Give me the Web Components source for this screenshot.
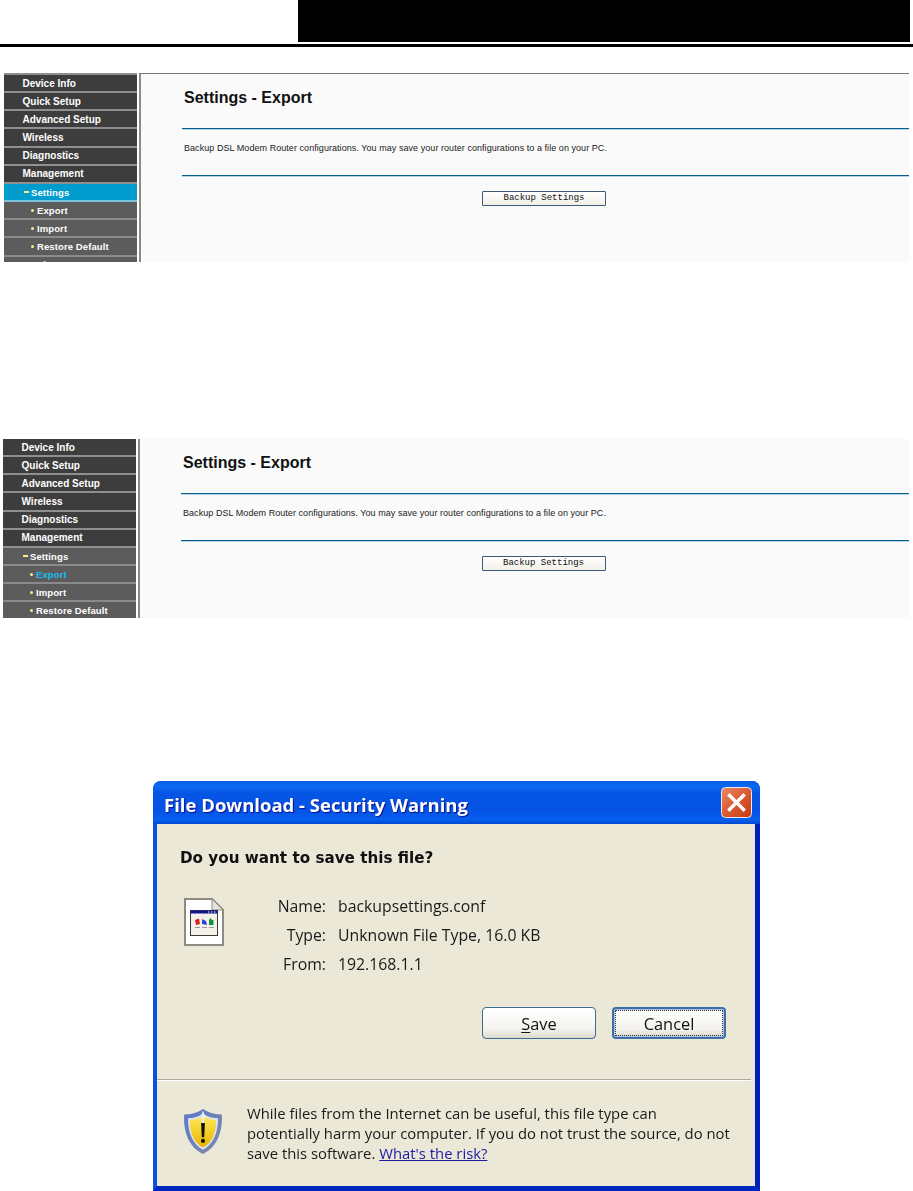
<!DOCTYPE html>
<html>
<head>
<meta charset="utf-8">
<title>Settings - Export</title>
<style>
  html, body { margin: 0; padding: 0; background: #fff; }
  body { height: 1191px; overflow: hidden; font-family: "Liberation Sans", Arial, sans-serif; }
</style>
</head>
<body>
<doc-header></doc-header>

<router-shot style="margin: 26px 4px 0 4px; height: 189px;" top-line>
  <nav-row>Device Info</nav-row>
  <nav-row>Quick Setup</nav-row>
  <nav-row>Advanced Setup</nav-row>
  <nav-row>Wireless</nav-row>
  <nav-row>Diagnostics</nav-row>
  <nav-row>Management</nav-row>
  <nav-row level="1" active>Settings</nav-row>
  <nav-row level="2">Export</nav-row>
  <nav-row level="2">Import</nav-row>
  <nav-row level="2">Restore Default</nav-row>
  <nav-row level="1">Reboot</nav-row>
</router-shot>

<router-shot style="margin: 177px 4px 0 3px; height: 179px;">
  <nav-row>Device Info</nav-row>
  <nav-row>Quick Setup</nav-row>
  <nav-row>Advanced Setup</nav-row>
  <nav-row>Wireless</nav-row>
  <nav-row>Diagnostics</nav-row>
  <nav-row>Management</nav-row>
  <nav-row level="1">Settings</nav-row>
  <nav-row level="2" current>Export</nav-row>
  <nav-row level="2">Import</nav-row>
  <nav-row level="2">Restore Default</nav-row>
</router-shot>

<xp-dialog style="margin: 163px 0 0 153px;"></xp-dialog>

<script>
// top of the manual page: empty left part, black bar, thick rule
const templateDocHeader = document.createElement('template');
templateDocHeader.innerHTML = `
<style>
  :host { display: block; }
  .bar { height: 42px; margin: 0 3px 0 298px; background: #000; }
  .rule { height: 3px; margin-top: 2px; background: #000; }
</style>
<div class="bar"></div>
<div class="rule"></div>
`;
class DocHeader extends HTMLElement {
  constructor() {
    super();
    this.attachShadow({ mode: 'open' });
    this.shadowRoot.appendChild(templateDocHeader.content.cloneNode(true));
  }
}
customElements.define('doc-header', DocHeader);

const templateNavRow = document.createElement('template');
templateNavRow.innerHTML = `
<style>
  :host {
    display: flex;
    align-items: center;
    box-sizing: border-box;
    flex: none;
    height: 18.17px;
    padding-left: 18.5px;
    background: #3d3d3d;
    border-bottom: 2px solid #8f8f8f;
    color: #fff;
    font: bold 10px "Liberation Sans", Arial, sans-serif;
    white-space: nowrap;
  }
  :host([level="1"]), :host([level="2"]) {
    background: #5c5c5c;
    border-bottom-color: #8a8a8a;
    font-size: 9.5px;
    letter-spacing: 0.1px;
  }
  :host([level="1"]) { padding-left: 20px; }
  :host([level="2"]) { padding-left: 27px; }
  :host([active]) { background: #009cce; border-bottom-color: #7fc4dd; }
  :host([current]) { color: #16bdf0; }
  .dash { display: none; width: 5px; height: 2px; margin-right: 2px; background: #ffe98a; }
  .dot { display: none; width: 3px; height: 3px; margin-right: 3px; background: #ffe98a; border-radius: 50%; }
  :host([level="1"]) .dash { display: block; }
  :host([level="2"]) .dot { display: block; }
</style>
<span class="dash"></span><span class="dot"></span><slot></slot>
`;
class NavRow extends HTMLElement {
  constructor() {
    super();
    this.attachShadow({ mode: 'open' });
    this.shadowRoot.appendChild(templateNavRow.content.cloneNode(true));
  }
}
customElements.define('nav-row', NavRow);

// one screenshot of the router web page: menu on the left, export form on the right
const templateRouterShot = document.createElement('template');
templateRouterShot.innerHTML = `
<style>
  :host { display: flex; overflow: hidden; }
  .menu {
    display: flex;
    flex-direction: column;
    flex: none;
    width: 133px;
    box-sizing: border-box;
    overflow: hidden;
  }
  :host([top-line]) .menu { border-top: 2px solid #8f8f8f; }
  .main {
    flex: 1;
    margin-left: 2px;
    padding: 14px 0 0 41px;
    background: #fafafa;
    border-left: 2px solid #8b8b80;
  }
  :host([top-line]) .main { border-top: 1px solid #77776e; }
  h1 {
    margin: 0 0 0 2px;
    font: bold 16px/19px "Liberation Sans", Arial, sans-serif;
    color: #111;
  }
  .line { height: 1px; background: #05608f; border-bottom: 1px solid #b6d3e4; }
  .first { margin-top: 21px; }
  p {
    margin: 0;
    padding: 10px 0 18px 2px;
    font: 9px/17px "Liberation Sans", Arial, sans-serif;
    letter-spacing: 0.055px;
    color: #222;
    white-space: nowrap;
  }
  .actions { display: flex; justify-content: center; padding: 14px 3px 0 0; }
  button {
    width: 124px;
    height: 15px;
    padding: 0;
    background: linear-gradient(#fff, #f1efe6);
    border: 1px solid #3c5a78;
    border-radius: 1px;
    font: 9px/13px "Liberation Mono", monospace;
    color: #111;
  }
</style>
<div class="menu"><slot></slot></div>
<div class="main">
  <h1>Settings - Export</h1>
  <div class="line first"></div>
  <p>Backup DSL Modem Router configurations. You may save your router configurations to a file on your PC.</p>
  <div class="line"></div>
  <div class="actions"><button>Backup Settings</button></div>
</div>
`;
class RouterShot extends HTMLElement {
  constructor() {
    super();
    this.attachShadow({ mode: 'open' });
    this.shadowRoot.appendChild(templateRouterShot.content.cloneNode(true));
  }
}
customElements.define('router-shot', RouterShot);

const templateXpButton = document.createElement('template');
templateXpButton.innerHTML = `
<style>
  :host {
    display: flex;
    align-items: center;
    justify-content: center;
    box-sizing: border-box;
    width: 114px;
    height: 32px;
    background: linear-gradient(#fff, #f4f3ee 70%, #dcd8ce);
    border: 1px solid #3f6a92;
    border-radius: 4px;
    font-size: 16.4px;
    color: #111;
  }
  :host([focused]) {
    border: 2px solid #3f6fa8;
    box-shadow: inset 0 0 0 1px #a9c0e4;
    outline: 1px dotted #333;
    outline-offset: -4px;
  }
</style>
<slot></slot>
`;
class XpButton extends HTMLElement {
  constructor() {
    super();
    this.attachShadow({ mode: 'open' });
    this.shadowRoot.appendChild(templateXpButton.content.cloneNode(true));
  }
}
customElements.define('xp-button', XpButton);

// the Windows XP "File Download" box, cut off by the page bottom
const templateXpDialog = document.createElement('template');
templateXpDialog.innerHTML = `
<style>
  :host {
    display: block;
    width: 607px;
    height: 410px;
    font-family: "Open Sans", "Noto Sans", sans-serif;
    color: #1a1a1a;
    filter: blur(0.35px);
  }
  .frame {
    box-sizing: border-box;
    display: flex;
    flex-direction: column;
    height: 100%;
    background: #ebe8d8;
    border-radius: 8px 8px 0 0;
    border-style: solid;
    border-width: 0 5px 5px 4px;
    border-color: #0a50e0 #0021b8 #0026c0 #0a50e0;
  }
  .title {
    display: flex;
    align-items: center;
    justify-content: space-between;
    box-sizing: border-box;
    height: 43px;
    margin: 0 -5px 0 -4px;
    padding: 0 8px 0 11px;
    border-radius: 8px 8px 0 0;
    background: linear-gradient(#0a5be0, #0a6af2 12%, #0655e4 30%, #0453e6 70%, #0660f0 90%, #0047d0);
    color: #fff;
    font: bold 18.5px "Open Sans", sans-serif;
    text-shadow: 1px 1px 1px #0f1089;
    white-space: nowrap;
  }
  .title span { margin-top: 4px; }
  .close {
    display: block;
    flex: none;
    width: 31px;
    height: 31px;
  }
  .body { flex: 1; padding: 24px 0 0 23px; display: flex; flex-direction: column; }
  .ask { font: bold 15.2px/20px "DejaVu Sans", sans-serif; color: #111; }
  .info { display: flex; margin-top: 24px; }
  .doc { flex: none; width: 40px; height: 48px; margin: 6px 0 0 4px; }
  dl {
    display: grid;
    grid-template-columns: 60px auto;
    column-gap: 12px;
    row-gap: 0;
    margin: 0 0 0 42px;
    font-size: 15.8px;
    line-height: 29px;
  }
  dt { text-align: right; }
  dd { margin: 0; }
  .buttons { display: flex; justify-content: flex-end; gap: 16px; margin: 28px 29px 0 0; }
  u { text-underline-offset: 2px; }
  .sep { margin: 40px 4px 0 -23px; border-top: 1px solid #aca899; border-bottom: 1px solid #fff; }
  .warn { display: flex; padding: 22px 0 0 3px; }
  .shield { flex: none; width: 40px; height: 47px; margin-top: 5px; }
  .warn p {
    margin: 0 0 0 24px;
    font-size: 14.85px;
    line-height: 20px;
    white-space: nowrap;
  }
  a { color: #1b1ba8; text-decoration: underline; }
</style>
<div class="frame">
  <div class="title">
    <span>File Download - Security Warning</span>
    <svg class="close" viewBox="0 0 31 31">
      <defs><linearGradient id="cg" x1="0" y1="0" x2="1" y2="1"><stop offset="0" stop-color="#ea8a66"/><stop offset="0.5" stop-color="#dc5a30"/><stop offset="1" stop-color="#c23a12"/></linearGradient></defs>
      <rect x="0.5" y="0.5" width="30" height="30" rx="4" fill="url(#cg)" stroke="#e8e8f4"/>
      <path d="M8.5 8.5 L22.5 22.5 M22.5 8.5 L8.5 22.5" stroke="#fff" stroke-width="3.4" stroke-linecap="square"/>
    </svg>
  </div>
  <div class="body">
    <div class="ask">Do you want to save this file?</div>
    <div class="info">
      <svg class="doc" viewBox="0 0 40 48">
        <path d="M1 1 H28 L39 12 V47 H1 Z" fill="#fff" stroke="#8c8c84" stroke-width="2"/>
        <path d="M28 1 V12 H39 Z" fill="#e4e4dc" stroke="#8c8c84"/>
        <rect x="6.5" y="12.5" width="27" height="25" fill="#f4f2e8" stroke="#3a3a3a"/>
        <rect x="6.5" y="12.5" width="27" height="3" fill="#14148c"/>
        <path d="M24 14h1.4M27 14h1.4M30 14h1.4" stroke="#fff"/>
        <path d="M11 22 L15 20.5 L16 26 L12 27 Z" fill="#dc1e1e"/>
        <path d="M18 21 L22 23 L23 27 L18 26 Z" fill="#2f3fdc"/>
        <path d="M26.5 20 L28 22 H29.5 V27 H25 V22 Z" fill="#14923a"/>
        <path d="M11 29.5h5M18 29.5h5M25 29.5h5" stroke="#9a9a9a"/>
      </svg>
      <dl>
        <dt>Name:</dt><dd>backupsettings.conf</dd>
        <dt>Type:</dt><dd>Unknown File Type, 16.0 KB</dd>
        <dt>From:</dt><dd>192.168.1.1</dd>
      </dl>
    </div>
    <div class="buttons">
      <xp-button><u>S</u>ave</xp-button>
      <xp-button focused>Cancel</xp-button>
    </div>
    <div class="sep"></div>
    <div class="warn">
      <svg class="shield" viewBox="0 0 42 50">
        <defs>
          <linearGradient id="sy" x1="0" y1="0" x2="0" y2="1"><stop offset="0" stop-color="#ffe95a"/><stop offset="1" stop-color="#e8b400"/></linearGradient>
          <linearGradient id="sb" x1="0" y1="0" x2="1" y2="1"><stop offset="0" stop-color="#5d78c8"/><stop offset="1" stop-color="#7f8aa8"/></linearGradient>
        </defs>
        <path d="M21 1 C27 5 34 7 41 7 C42 24 37 41 21 49 C5 41 0 24 1 7 C8 7 15 5 21 1 Z" fill="url(#sb)"/>
        <path d="M21 6 C26 9 32 11 37 11 C37 25 33 38 21 44.5 C9 38 5 25 5 11 C10 11 16 9 21 6 Z" fill="#dfe4f0"/>
        <path d="M21 8 C26 11 31 13 35 13 C35 26 31 37 21 42 C11 37 7 26 7 13 C11 13 16 11 21 8 Z" fill="url(#sy)"/>
        <path d="M21 3 L23 8 L22 16 H20 L19 8 Z" fill="#e8ecf4"/>
        <path d="M19 16 H23 L22.3 31 H19.7 Z" fill="#111"/>
        <circle cx="21" cy="35" r="2.2" fill="#111"/>
      </svg>
      <p>While files from the Internet can be useful, this file type can<br>potentially harm your computer. If you do not trust the source, do not<br>save this software. <a>What's the risk?</a></p>
    </div>
  </div>
</div>
`;
class XpDialog extends HTMLElement {
  constructor() {
    super();
    this.attachShadow({ mode: 'open' });
    this.shadowRoot.appendChild(templateXpDialog.content.cloneNode(true));
  }
}
customElements.define('xp-dialog', XpDialog);
</script>
</body>
</html>
